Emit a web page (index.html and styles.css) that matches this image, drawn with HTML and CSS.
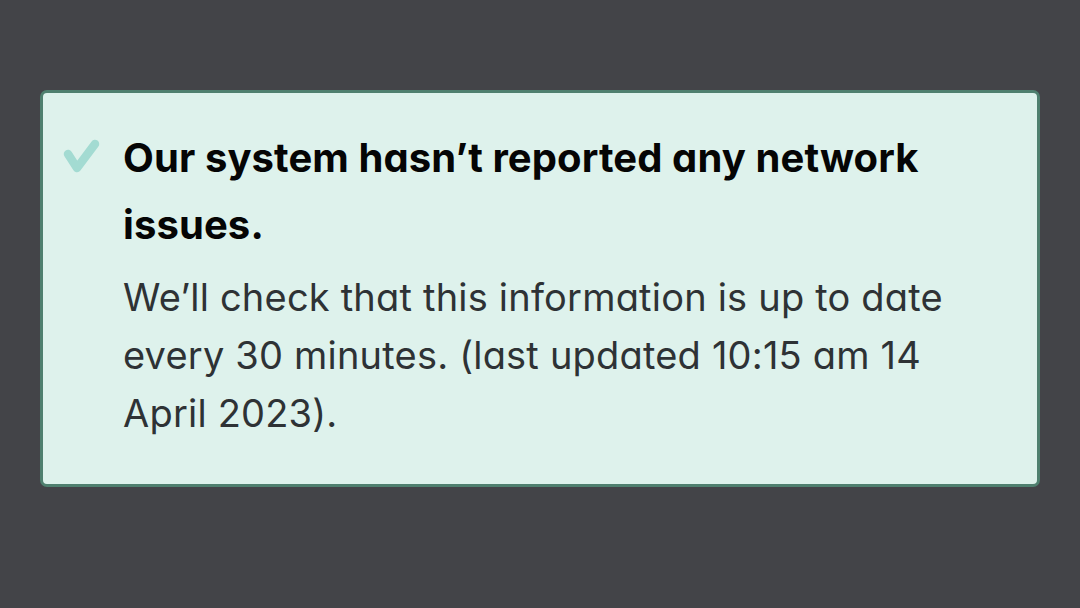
FILE: index.html
```html
<!DOCTYPE html>
<html lang="en">
<head>
<meta charset="utf-8">
<title>Network status</title>
<link rel="stylesheet" href="styles.css">
</head>
<body>
<div class="page">
  <section class="notice">
    <svg class="notice-icon" width="44" height="44" viewBox="0 0 44 44" aria-hidden="true">
      <path d="M8 18 L17 32 L35 8" fill="none" stroke="#a3dbd2" stroke-width="8.5" stroke-linecap="round" stroke-linejoin="round"/>
    </svg>
    <div class="notice-text">
      <h2 class="notice-title">Our system hasn’t reported any network issues.</h2>
      <p class="notice-body">We’ll check that this information is up to date every 30 minutes. (last updated 10:15 am 14 April 2023).</p>
    </div>
  </section>
</div>
</body>
</html>
```
FILE: styles.css
```css
html, body {
  margin: 0;
  padding: 0;
}
body {
  background: #434448;
  width: 1080px;
  height: 608px;
  overflow: hidden;
  font-family: Inter, "Open Sans", sans-serif;
  font-feature-settings: "cv11" 1;
}
.page {
  padding: 90px 40px 0 40px;
}
.notice {
  box-sizing: border-box;
  width: 1000px;
  height: 397px;
  background: #def2ec;
  border: 3px solid #4f806f;
  border-radius: 7px;
  display: flex;
  align-items: flex-start;
  padding: 31px 78px 0 17px;
}
.notice-icon {
  flex: 0 0 auto;
  margin-top: 12px;
  margin-right: 19px;
}
.notice-text {
  flex: 1 1 auto;
}
.notice-title {
  margin: 0;
  font-size: 40px;
  font-weight: 700;
  line-height: 67px;
  color: #050505;
  letter-spacing: 0.1px;
}
.notice-body {
  margin: 10px 0 0 0;
  font-size: 38px;
  font-weight: 400;
  line-height: 58px;
  color: #2e3235;
  letter-spacing: 0.2px;
}
```
